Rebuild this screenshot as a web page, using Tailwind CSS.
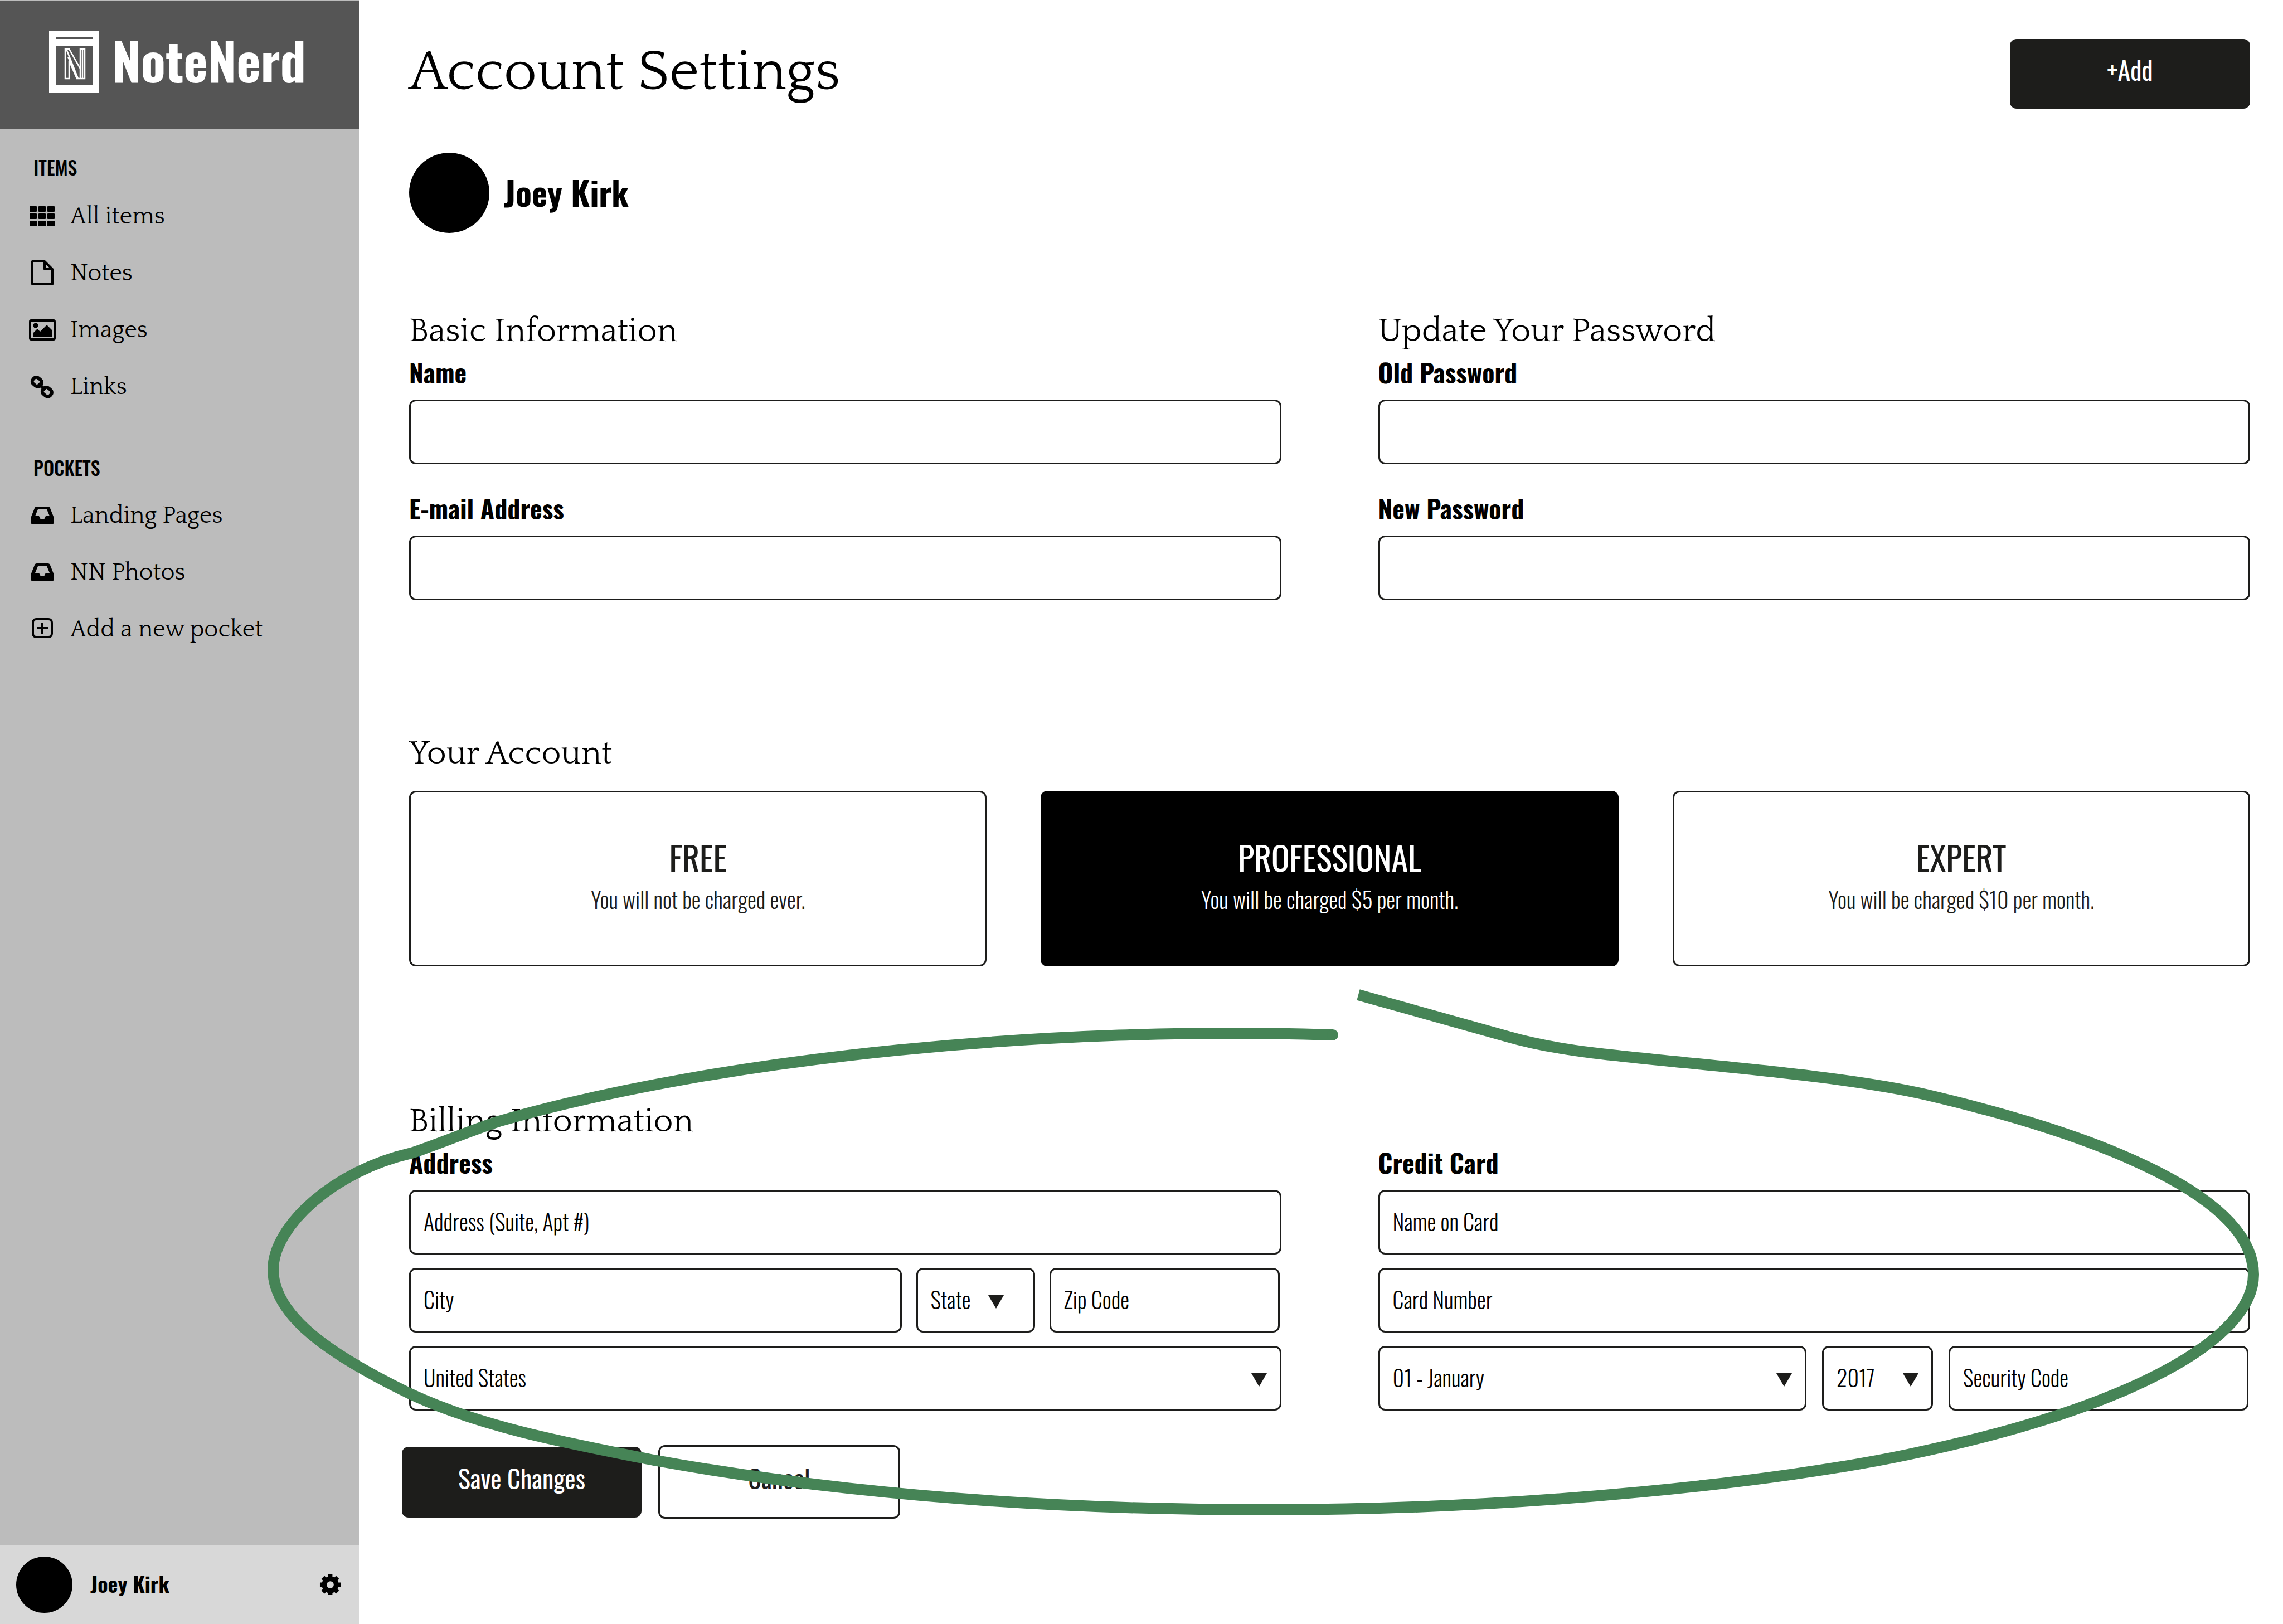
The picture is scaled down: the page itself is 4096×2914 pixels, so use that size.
<!DOCTYPE html>
<html lang="en">
<head>
<meta charset="utf-8">
<meta name="viewport" content="width=device-width, initial-scale=1">
<title>NoteNerd – Account Settings</title>
<script src="https://cdn.jsdelivr.net/npm/@tailwindcss/browser@4"></script>
</head>
<body class="bg-white text-black">
<div class="relative flex min-h-screen font-['Oswald',sans-serif]">

  <!-- Sidebar -->
  <aside class="flex w-[644px] shrink-0 flex-col bg-[#bcbcbc]">
    <a href="#" class="mt-0.5 flex h-[229px] items-start gap-6 bg-[#555555] pt-[53px] pl-[88px] text-white">
      <svg class="h-[111px] w-[89px] shrink-0" viewBox="0 0 89 111" aria-hidden="true">
        <rect width="89" height="111" fill="#fff"/>
        <rect x="12" y="11" width="66" height="4" fill="#555"/>
        <rect x="12" y="27" width="66" height="71" fill="#555"/>
        <path d="M29 33v53h7V54l14 32h14V33h-8v35L36 33z M56 33v53 M60 33v53 M31 33l21 53 M34 47l17 37" fill="none" stroke="#fff" stroke-width="2.5"/>
      </svg>
      <span class="-mt-2 text-[92px] leading-[120px] font-bold">NoteNerd</span>
    </a>

    <nav aria-label="Items" class="mt-[44px] pl-[52px]">
      <h2 class="pl-2 text-[34px] leading-[50px] font-medium">ITEMS</h2>
      <ul class="mt-[13px] font-['Quattrocento',serif] text-[43px] leading-[102px]">
        <li><a href="#" class="flex items-center gap-[26px]">
          <svg class="size-12" viewBox="0 0 48 48" aria-hidden="true"><path d="M2 6h11v8H2zM18 6h11v8H18zM34 6h11v8H34zM2 19h11v8H2zM18 19h11v8H18zM34 19h11v8H34zM2 32h11v8H2zM18 32h11v8H18zM34 32h11v8H34z" stroke="#000" stroke-width="2" stroke-linejoin="round"/></svg>
          All items</a></li>
        <li><a href="#" class="flex items-center gap-[26px]">
          <svg class="size-12" viewBox="0 0 48 48" fill="none" stroke="#000" stroke-width="4" stroke-linejoin="round" aria-hidden="true"><path d="M6 2h22l14 14v27H6zM28 2v14h14"/></svg>
          Notes</a></li>
        <li><a href="#" class="flex items-center gap-[26px]">
          <svg class="size-12" viewBox="0 0 48 48" aria-hidden="true"><rect x="2" y="6" width="44" height="34" rx="2" fill="none" stroke="#000" stroke-width="4"/><circle cx="12" cy="15" r="4.500"/><path d="M7 35v-6l8-8 5 5 12-12 9 9v12z"/></svg>
          Images</a></li>
        <li><a href="#" class="flex items-center gap-[26px]">
          <svg class="size-12" viewBox="0 0 48 48" fill="none" stroke="#000" stroke-width="6" aria-hidden="true"><rect x="6" y="7" width="17" height="14" rx="6" transform="rotate(40 14 14)"/><rect x="24" y="25" width="17" height="14" rx="6" transform="rotate(40 32 32)"/><path d="M17 17l12 12"/></svg>
          Links</a></li>
      </ul>
    </nav>

    <nav aria-label="Pockets" class="mt-[68px] pl-[52px]">
      <h2 class="pl-2 text-[34px] leading-[50px] font-medium">POCKETS</h2>
      <ul class="mt-[11px] font-['Quattrocento',serif] text-[43px] leading-[102px]">
        <li><a href="#" class="flex items-center gap-[26px]">
          <svg class="size-12" viewBox="0 0 48 48" aria-hidden="true"><path fill-rule="evenodd" d="M4 25l6-15q1-3 4-3h20q3 0 4 3l6 15v12q0 2-2 2H6q-2 0-2-2zM11 24h7l3 6h6l3-6h7l-5-12H16z"/></svg>
          Landing Pages</a></li>
        <li><a href="#" class="flex items-center gap-[26px]">
          <svg class="size-12" viewBox="0 0 48 48" aria-hidden="true"><path fill-rule="evenodd" d="M4 25l6-15q1-3 4-3h20q3 0 4 3l6 15v12q0 2-2 2H6q-2 0-2-2zM11 24h7l3 6h6l3-6h7l-5-12H16z"/></svg>
          NN Photos</a></li>
        <li><a href="#" class="flex items-center gap-[26px]">
          <svg class="size-12" viewBox="0 0 48 48" fill="none" stroke="#000" stroke-width="4" aria-hidden="true"><rect x="7" y="5" width="34" height="32" rx="6"/><path d="M14 21h20M24 11v20"/></svg>
          Add a new pocket</a></li>
      </ul>
    </nav>

    <div class="mt-auto flex h-[142px] items-center bg-[#d8d8d8] pr-8 pl-[29px]">
      <div class="size-[101px] rounded-full bg-black"></div>
      <span class="ml-8 pb-1 text-[38px] leading-[56px] font-bold">Joey Kirk</span>
      <button type="button" aria-label="Settings" class="ml-auto">
        <svg class="size-[39px]" viewBox="0 0 40 40" aria-hidden="true"><circle cx="20" cy="20" r="11" fill="none" stroke="#000" stroke-width="9"/><path d="M20 1v9M20 30v9M1 20h9M30 20h9M6.500 6.500l7 7M26.500 26.500l7 7M6.500 33.500l7-7M26.500 13.500l7-7" stroke="#000" stroke-width="8"/></svg>
      </button>
    </div>
  </aside>

  <!-- Account settings -->
  <main class="min-w-0 flex-1 pt-[70px] pr-[59px] pl-[90px]">
    <header class="flex items-start justify-between">
      <h1 class="font-['Quattrocento',serif] text-[102px] leading-[120px]">Account Settings</h1>
      <button type="button" class="h-[125px] w-[431px] rounded-xl bg-[#1d1d1b] pb-4 text-[46px] font-normal text-white">+Add</button>
    </header>

    <div class="mt-[79px] flex items-center gap-[26px]">
      <div class="size-36 rounded-full bg-black"></div>
      <span class="pb-1 text-[60px] leading-[88px] font-bold">Joey Kirk</span>
    </div>

    <form>
      <div class="mt-[139px] grid grid-cols-2 gap-x-[174px]">
        <section>
          <h2 class="font-['Quattrocento',serif] text-[60px] leading-[76px]">Basic Information</h2>
          <label for="name" class="block text-[46px] leading-[68px] font-bold">Name</label>
          <input id="name" type="text" class="mt-4 block h-[116px] w-full rounded-xl border-3 border-[#1d1d1b] px-[23px] text-[40px] font-light">
          <label for="email" class="mt-11 block text-[46px] leading-[68px] font-bold">E-mail Address</label>
          <input id="email" type="email" class="mt-4 block h-[116px] w-full rounded-xl border-3 border-[#1d1d1b] px-[23px] text-[40px] font-light">
        </section>
        <section>
          <h2 class="font-['Quattrocento',serif] text-[60px] leading-[76px]">Update Your Password</h2>
          <label for="old" class="block text-[46px] leading-[68px] font-bold">Old Password</label>
          <input id="old" type="password" class="mt-4 block h-[116px] w-full rounded-xl border-3 border-[#1d1d1b] px-[23px] text-[40px] font-light">
          <label for="new" class="mt-11 block text-[46px] leading-[68px] font-bold">New Password</label>
          <input id="new" type="password" class="mt-4 block h-[116px] w-full rounded-xl border-3 border-[#1d1d1b] px-[23px] text-[40px] font-light">
        </section>
      </div>

      <section class="mt-[238px]">
        <h2 class="font-['Quattrocento',serif] text-[60px] leading-[76px]">Your Account</h2>
        <div class="mt-7 grid grid-cols-3 gap-[97px]">
          <button type="button" class="flex h-[315px] flex-col items-center justify-center rounded-xl border-3 border-[#1d1d1b] pb-1 text-[#1d1d1b]">
            <span class="text-[60px] leading-[76px] font-normal">FREE</span>
            <span class="text-[40px] leading-[76px] font-light">You will not be charged ever.</span>
          </button>
          <button type="button" aria-pressed="true" class="flex h-[315px] flex-col items-center justify-center rounded-xl border-3 border-black bg-black pb-1 text-white">
            <span class="text-[60px] leading-[76px] font-normal">PROFESSIONAL</span>
            <span class="text-[40px] leading-[76px] font-light">You will be charged $5 per month.</span>
          </button>
          <button type="button" class="flex h-[315px] flex-col items-center justify-center rounded-xl border-3 border-[#1d1d1b] pb-1 text-[#1d1d1b]">
            <span class="text-[60px] leading-[76px] font-normal">EXPERT</span>
            <span class="text-[40px] leading-[76px] font-light">You will be charged $10 per month.</span>
          </button>
        </div>
      </section>

      <section class="mt-[241px]">
        <h2 class="font-['Quattrocento',serif] text-[60px] leading-[76px]">Billing Information</h2>
        <div class="grid grid-cols-2 gap-x-[174px]">
          <div>
            <label for="address" class="block text-[46px] leading-[68px] font-bold">Address</label>
            <div class="mt-4 flex flex-col gap-6 text-[40px] font-light">
              <input id="address" type="text" placeholder="Address (Suite, Apt #)" class="h-[116px] w-full rounded-xl border-3 border-[#1d1d1b] px-[23px] pb-1 placeholder:text-black">
              <div class="flex gap-[26px] pr-[3px]">
                <input type="text" aria-label="City" placeholder="City" class="h-[116px] min-w-0 flex-1 rounded-xl border-3 border-[#1d1d1b] px-[23px] pb-1 placeholder:text-black">
                <div class="relative w-[213px]">
                  <select aria-label="State" class="h-[116px] w-full appearance-none rounded-xl border-3 border-[#1d1d1b] px-[23px] pb-1"><option>State</option></select>
                  <svg class="pointer-events-none absolute top-[49px] right-14 h-6 w-7" viewBox="0 0 28 24" aria-hidden="true"><path d="M0 0h28L14 24z" fill="#1d1d1b"/></svg>
                </div>
                <input type="text" aria-label="Zip Code" placeholder="Zip Code" class="h-[116px] w-[413px] rounded-xl border-3 border-[#1d1d1b] px-[23px] pb-1 placeholder:text-black">
              </div>
              <div class="relative">
                <select aria-label="Country" class="h-[116px] w-full appearance-none rounded-xl border-3 border-[#1d1d1b] px-[23px] pb-1"><option>United States</option></select>
                <svg class="pointer-events-none absolute top-[49px] right-[26px] h-6 w-7" viewBox="0 0 28 24" aria-hidden="true"><path d="M0 0h28L14 24z" fill="#1d1d1b"/></svg>
              </div>
            </div>
          </div>
          <div>
            <label for="card" class="block text-[46px] leading-[68px] font-bold">Credit Card</label>
            <div class="mt-4 flex flex-col gap-6 text-[40px] font-light">
              <input id="card" type="text" placeholder="Name on Card" class="h-[116px] w-full rounded-xl border-3 border-[#1d1d1b] px-[23px] pb-1 placeholder:text-black">
              <input type="text" aria-label="Card Number" placeholder="Card Number" class="h-[116px] w-full rounded-xl border-3 border-[#1d1d1b] px-[23px] pb-1 placeholder:text-black">
              <div class="flex gap-7 pr-[3px]">
                <div class="relative min-w-0 flex-1">
                  <select aria-label="Expiry month" class="h-[116px] w-full appearance-none rounded-xl border-3 border-[#1d1d1b] px-[23px] pb-1"><option>01 - January</option></select>
                  <svg class="pointer-events-none absolute top-[49px] right-[26px] h-6 w-7" viewBox="0 0 28 24" aria-hidden="true"><path d="M0 0h28L14 24z" fill="#1d1d1b"/></svg>
                </div>
                <div class="relative w-[199px]">
                  <select aria-label="Expiry year" class="h-[116px] w-full appearance-none rounded-xl border-3 border-[#1d1d1b] px-[23px] pb-1"><option>2017</option></select>
                  <svg class="pointer-events-none absolute top-[49px] right-[26px] h-6 w-7" viewBox="0 0 28 24" aria-hidden="true"><path d="M0 0h28L14 24z" fill="#1d1d1b"/></svg>
                </div>
                <input type="text" aria-label="Security Code" placeholder="Security Code" class="h-[116px] w-[538px] rounded-xl border-3 border-[#1d1d1b] px-[23px] pb-1 placeholder:text-black">
              </div>
            </div>
          </div>
        </div>
      </section>

      <div class="mt-[62px] -ml-[13px] flex items-center gap-[30px] text-[46px]">
        <button type="submit" class="h-[127px] w-[430px] rounded-xl bg-[#1d1d1b] pb-4 text-white">Save Changes</button>
        <button type="button" class="h-[132px] w-[434px] rounded-xl border-3 border-[#1d1d1b] pb-4 text-[#1d1d1b]">Cancel</button>
      </div>
    </form>
  </main>

  <!-- Hand-drawn loop around the billing form -->
  <svg class="pointer-events-none absolute inset-0 h-full w-full" viewBox="0 0 4096 2914" preserveAspectRatio="none" fill="none" stroke="#468456" stroke-width="20" aria-hidden="true">
    <path d="M2437 1785L2705 1860C2750 1873 2800 1882 2856 1889C3020 1909 3300 1928 3455 1964C3780 2040 4043 2150 4043 2287C4043 2400 3830 2525 3423 2610C3200 2657 2750 2709 2273 2709C1950 2709 1560 2690 1173 2620C1020 2590 860 2560 734 2500C590 2430 490 2360 490 2278C490 2200 600 2100 738 2069C790 2052 840 2030 895 2012C1300 1895 1900 1840 2391 1857"/>
    <circle cx="2391" cy="1857" r="10" fill="#468456" stroke="none"/>
  </svg>
</div>
</body>
</html>
